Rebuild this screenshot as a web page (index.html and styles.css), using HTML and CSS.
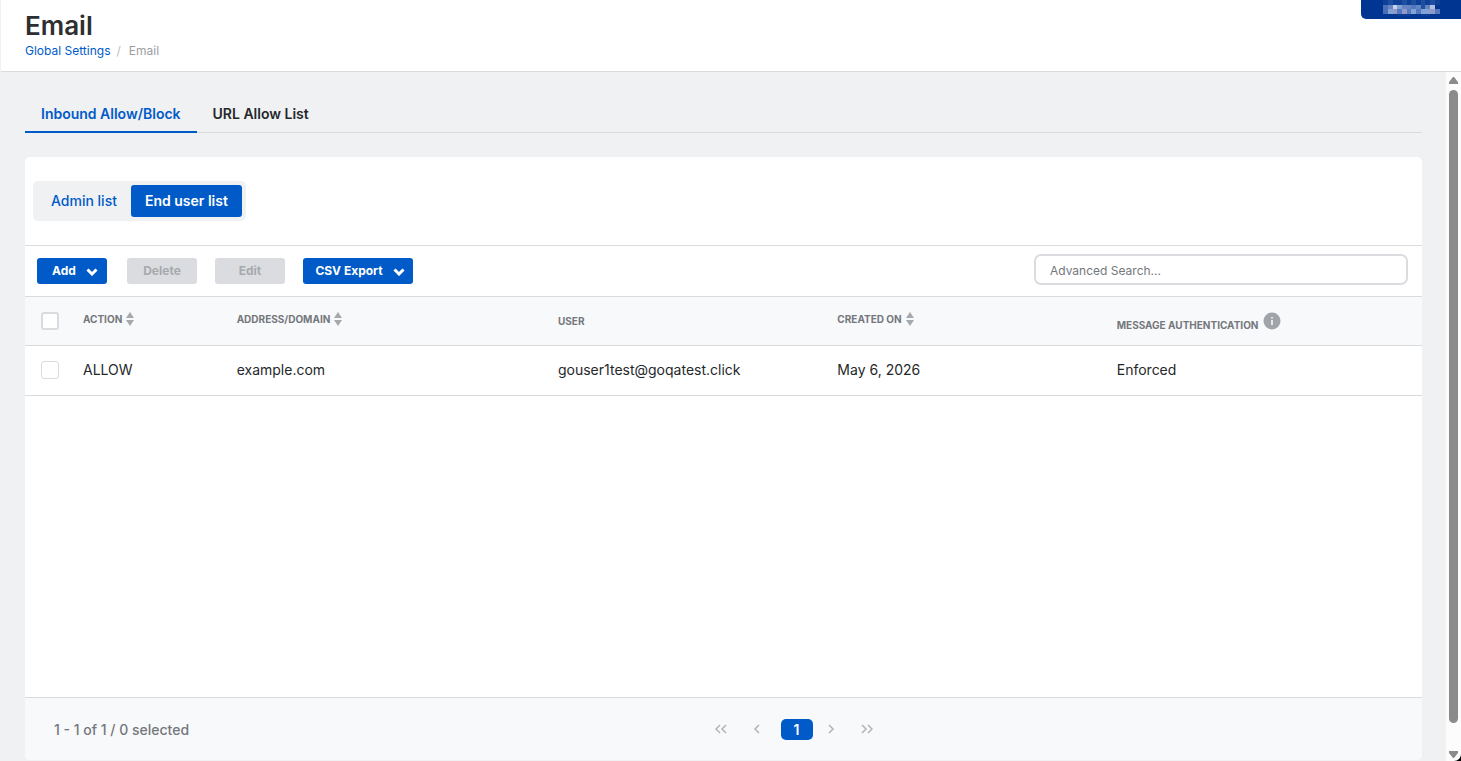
FILE: index.html
```html
<!DOCTYPE html>
<html lang="en">
<head>
<meta charset="utf-8">
<title>Email</title>
<link rel="stylesheet" href="styles.css">
</head>
<body>
<header class="page-header">
  <h1 class="title">Email</h1>
  <nav class="crumbs" aria-label="Breadcrumb"><a href="#">Global Settings</a><span class="slash">/</span><span>Email</span></nav>
  <div class="account">
    <svg width="60" height="18" viewBox="0 0 60 18" shape-rendering="crispEdges" aria-hidden="true">
      <path fill="#0d4096" d="M0 0h57v5H0z"/><path fill="#1c4f9f" d="M5 0h5v5H5zM19 0h5v5h-5zM28 0h5v5h-5zM38 0h4v5h-4zM47 0h5v5h-5z"/><path fill="#0b3d94" d="M14 14h14v2H14zM38 14h9v2h-9z"/>
      <path fill="#4a6fb8" d="M0 5h5v9H0z"/><path fill="#6484c2" d="M5 5h5v4H5zM19 5h9v4h-9zM33 5h5v4h-5zM42 5h5v4h-5z"/>
      <path fill="#c8d2e6" d="M10 5h4v4h-4z"/><path fill="#b4c0e0" d="M47 5h5v4h-5z"/><path fill="#80a2d4" d="M14 5h5v4h-5zM5 9h5v5H5zM28 9h5v5h-5zM38 9h9v5h-9z"/>
      <path fill="#5478bd" d="M28 5h5v4h-5zM14 9h5v5h-5zM24 9h4v5h-4zM33 9h5v5h-5zM52 9h5v5h-5z"/><path fill="#1c4f9f" d="M38 5h4v4h-4z"/><path fill="#9099c8" d="M10 9h4v5h-4zM19 9h5v5h-5zM47 9h5v5h-5z"/>
    </svg>
  </div>
</header>
<div class="body">
  <main class="content">
    <nav class="tabs">
      <a class="tab active" href="#" aria-current="page">Inbound Allow/Block</a>
      <a class="tab" href="#">URL Allow List</a>
    </nav>
    <section class="card">
      <div class="switch-row">
        <div class="switch"><button class="seg" type="button">Admin list</button><button class="seg on" type="button">End user list</button></div>
      </div>
      <div class="toolbar">
        <button class="btn add" type="button">Add<svg width="12" height="8" viewBox="0 0 12 8" aria-hidden="true"><path d="M1.500 1.500 6 6l4.500-4.500" fill="none" stroke="#fff" stroke-width="3"/></svg></button>
        <button class="btn" type="button" disabled>Delete</button>
        <button class="btn" type="button" disabled>Edit</button>
        <button class="btn export" type="button">CSV Export<svg width="12" height="8" viewBox="0 0 12 8" aria-hidden="true"><path d="M1.500 1.500 6 6l4.500-4.500" fill="none" stroke="#fff" stroke-width="3"/></svg></button>
        <input class="search" type="text" placeholder="Advanced Search..." aria-label="Advanced Search">
      </div>
      <div class="table-area">
        <table class="grid">
          <colgroup><col class="c-check"><col class="c-action"><col class="c-address"><col class="c-user"><col class="c-created"><col></colgroup>
          <thead>
            <tr>
              <th class="check"><input class="box all" type="checkbox" aria-label="Select all rows"></th>
              <th><span class="head sortable">ACTION<svg width="8" height="14" viewBox="0 0 8 14" aria-hidden="true"><path d="M4 0l4 6H0zM0 8h8l-4 6z" fill="#a5a8ac"/></svg></span></th>
              <th><span class="head sortable">ADDRESS/DOMAIN<svg width="8" height="14" viewBox="0 0 8 14" aria-hidden="true"><path d="M4 0l4 6H0zM0 8h8l-4 6z" fill="#a5a8ac"/></svg></span></th>
              <th><span class="head">USER</span></th>
              <th><span class="head sortable">CREATED ON<svg width="8" height="14" viewBox="0 0 8 14" aria-hidden="true"><path d="M4 0l4 6H0zM0 8h8l-4 6z" fill="#a5a8ac"/></svg></span></th>
              <th><span class="head info">MESSAGE AUTHENTICATION<svg width="18" height="18" viewBox="0 0 18 18" aria-hidden="true"><circle cx="9" cy="9" r="8.500" fill="#a1a4a8"/><path d="M8 5h2v1.500H8zM8 8h2v5H8z" fill="#e6e8ea"/></svg></span></th>
            </tr>
          </thead>
          <tbody>
            <tr>
              <td class="check"><input class="box" type="checkbox" aria-label="Select example.com"></td>
              <td>ALLOW</td><td>example.com</td><td>gouser1test@goqatest.click</td><td>May 6, 2026</td><td>Enforced</td>
            </tr>
          </tbody>
        </table>
      </div>
      <footer class="footer">
        <span class="count">1 - 1 of 1 / 0 selected</span>
        <nav class="pager" aria-label="Pages">
          <button class="step" type="button" aria-label="First page"><svg width="12" height="10" viewBox="0 0 12 10"><path d="M5 1 1 5l4 4M11 1 7 5l4 4"/></svg></button>
          <button class="step" type="button" aria-label="Previous page"><svg width="12" height="10" viewBox="0 0 12 10"><path d="M8 1 4 5l4 4"/></svg></button>
          <button class="page" type="button" aria-current="page">1</button>
          <button class="step" type="button" aria-label="Next page"><svg width="12" height="10" viewBox="0 0 12 10"><path d="m4 1 4 4-4 4"/></svg></button>
          <button class="step" type="button" aria-label="Last page"><svg width="12" height="10" viewBox="0 0 12 10"><path d="m1 1 4 4-4 4M7 1l4 4-4 4"/></svg></button>
        </nav>
      </footer>
    </section>
  </main>
  <div class="scrollbar" aria-hidden="true">
    <svg width="9" height="7" viewBox="0 0 9 7"><path d="M4 0h1l4 5v2H0V5z" fill="#8b8b8b"/></svg>
    <div class="thumb"></div>
    <svg width="9" height="7" viewBox="0 0 9 7"><path d="M4 7h1l4-5V0H0v2z" fill="#8b8b8b"/></svg>
    <svg class="corner" width="7" height="7" viewBox="0 0 7 7"><path d="M7 0v7H0c4 0 7-3 7-7z" fill="#000"/></svg>
  </div>
</div>
</body>
</html>
```
FILE: styles.css
```css
* { box-sizing: border-box; }
body {
  margin: 0;
  height: 100vh;
  display: flex;
  flex-direction: column;
  overflow: hidden;
  background: #f0f1f3;
  color: #25282a;
  font-family: Inter, "Liberation Sans", sans-serif;
  font-size: 14px;
}
button, input { font: inherit; margin: 0; }
button { border: 0; padding: 0; }
a { text-decoration: none; color: #005bc8; }
svg { display: block; flex: none; }

.page-header {
  position: relative;
  height: 72px;
  margin-left: 1px;
  padding: 10px 24px 0;
  background: #fff;
  border-bottom: 1px solid #d9dcdf;
}
.title { margin: 0; font-size: 26px; line-height: 32px; font-weight: 600; color: #2d2f31; }
.crumbs { display: flex; font-size: 12px; line-height: 18px; color: #9b9ea2; }
.slash { margin: 0 8px 0 6px; color: #b9bcc0; }
.account {
  position: absolute;
  top: 0;
  right: 0;
  width: 100px;
  height: 19px;
  padding-left: 22px;
  background: #003591;
  border-bottom-left-radius: 5px;
}

.body { flex: 1; min-height: 0; display: flex; }
.content { flex: 1; min-width: 0; display: flex; flex-direction: column; padding: 24px 24px 1px 25px; }
.tabs { display: flex; border-bottom: 1px solid #d9dcdf; margin-bottom: 24px; }
.tab {
  padding: 8px 16px 7px;
  margin-bottom: -1px;
  line-height: 20px;
  font-weight: 600;
  color: #25282a;
  border-bottom: 2px solid transparent;
}
.tab.active { color: #005bc8; border-color: #005bc8; }

.card { flex: 1; min-height: 0; display: flex; flex-direction: column; background: #fff; border-radius: 5px; overflow: hidden; }
.switch-row { padding: 24px 8px; border-bottom: 1px solid #d9dcdf; }
.switch { display: inline-flex; vertical-align: top; padding: 4px; background: #f0f1f3; border-radius: 5px; }
.seg { height: 32px; padding: 0 14px 1px; background: none; color: #005bc8; border-radius: 3px; font-weight: 500; }
.seg.on { background: #005bc8; color: #fff; font-weight: 600; }

.toolbar { display: flex; align-items: center; gap: 18px; height: 51px; padding: 0 14px 0 12px; border-bottom: 1px solid #d9dcdf; }
.btn {
  display: flex;
  align-items: center;
  justify-content: center;
  gap: 10px;
  width: 70px;
  height: 26px;
  padding-bottom: 1px;
  border-radius: 3px;
  background: #005bc8;
  color: #fff;
  font-size: 12px;
  font-weight: 700;
}
.btn:disabled { background: #dadce0; color: #a6a9ad; }
.btn svg { margin-top: 2px; }
.add { margin-right: 2px; padding-left: 6px; }
.export { width: 110px; padding-left: 4px; }
.search {
  width: 374px;
  height: 31px;
  margin: 0 0 4px auto;
  padding: 2px 14px 0;
  border: 2px solid #dadce0;
  border-radius: 7px;
  background: #fff;
  font-size: 12px;
}
.search::placeholder { color: #74777b; opacity: 1; }

.table-area { flex: 1; min-height: 0; }
.grid { width: 100%; table-layout: fixed; border-collapse: separate; border-spacing: 0; }
.c-check { width: 50px; }
.c-action { width: 11%; }
.c-address { width: 23%; }
.c-user, .c-created { width: 20%; }
.grid th, .grid td { padding: 0 8px; text-align: left; border-bottom: 1px solid #d9dcdf; white-space: nowrap; }
.grid th { height: 49px; background: #f8f9fb; color: #74777b; font-size: 10px; font-weight: 700; }
.grid td { height: 50px; padding-bottom: 2px; }
.grid .check { padding-left: 16px; padding-right: 0; }
.head { display: flex; align-items: center; line-height: 14px; }
.sortable { gap: 4px; padding-bottom: 4px; }
.info { gap: 4px; margin-top: 8px; line-height: 26px; }
.info svg { margin-bottom: 8px; }
.box { appearance: none; display: block; width: 18px; height: 18px; border: 1px solid #d9dcdf; border-radius: 3px; background: #fff; }
.box.all { border-width: 2px; }

.footer {
  display: flex;
  align-items: center;
  height: 63px;
  padding: 0 24px 0 29px;
  border-top: 1px solid #d9dcdf;
  background: #f8f9fb;
  color: #74777b;
}
.count { font-weight: 500; }
.pager { flex: 1; display: flex; align-items: center; justify-content: center; gap: 24px; }
.step { background: none; }
.step path { fill: none; stroke: #b0b3b7; stroke-width: 1.5; }
.page { width: 32px; height: 21px; margin: 0 -12px 0 -6px; border-radius: 5px; background: #005bc8; color: #fff; font-weight: 600; }

.scrollbar { position: relative; width: 15px; padding: 5px 0 3px; display: flex; flex-direction: column; align-items: center; background: #fcfcfc; }
.thumb { flex: 1; width: 9px; margin: 6px 0 28px; border-radius: 5px; background: #8b8b8b; }
.corner { position: absolute; right: 0; bottom: 0; }
```
